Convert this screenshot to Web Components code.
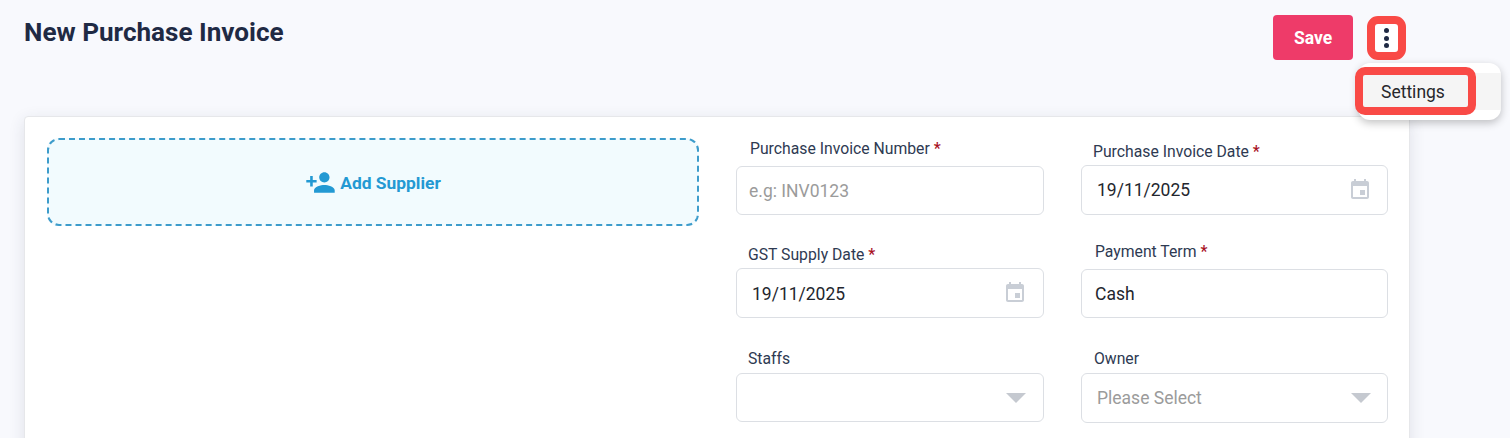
<!DOCTYPE html>
<html>
<head>
<meta charset="utf-8">
<title>New Purchase Invoice</title>
<style>
    html, body { margin: 0; height: 438px; overflow: hidden; background: #f8f9fd; font-family: Roboto, "Liberation Sans", sans-serif; }
</style>
</head>
<body>
<invoice-page>
    <page-header slot="header" title="New Purchase Invoice"></page-header>
    <invoice-card slot="card">
        <add-supplier slot="left"></add-supplier>
        <form-field style="--top:22px;--label-x:14px;--gap:8px;--h:49px;--pad:12px" label="Purchase Invoice Number" required placeholder>e.g: INV0123</form-field>
        <form-field style="--top:25px;--label-x:12px;--gap:4px;--h:50px;--pad:15px;--end:17px" label="Purchase Invoice Date" required icon="date">19/11/2025</form-field>
        <form-field style="--top:30px;--label-x:12px;--gap:4px;--h:50px;--pad:15px;--text-y:1px" label="GST Supply Date" required icon="date">19/11/2025</form-field>
        <form-field style="--top:27px;--label-x:14px;--gap:8px;--h:49px;--pad:13px" label="Payment Term" required>Cash</form-field>
        <form-field style="--top:31px;--label-x:12px;--gap:5px;--h:49px" label="Staffs" icon="arrow"></form-field>
        <form-field style="--top:31px;--label-x:13px;--gap:5px;--h:50px;--pad:15px;--end:17px" label="Owner" placeholder icon="arrow">Please Select</form-field>
    </invoice-card>
</invoice-page>
<script>
class InvoicePage extends HTMLElement {
    constructor() {
        super();
        this.attachShadow({ mode: 'open' });
        this.shadowRoot.innerHTML = `
        <style>
            :host { display: block; padding: 0 100px 0 24px; color: #1f2a44; }
        </style>
        <slot name="header"></slot>
        <slot name="card"></slot>
        `;
    }
}

class PageHeader extends HTMLElement {
    constructor() {
        super();
        this.attachShadow({ mode: 'open' });
        this.shadowRoot.innerHTML = `
        <style>
            :host { display: flex; justify-content: space-between; align-items: flex-start; height: 116px; position: relative; }
            h1 { margin: 15px 0 0; font-size: 26.1px; line-height: 34px; font-weight: 700; color: #1f2a44; }
            .actions { display: flex; align-items: flex-start; margin-top: 15px; margin-right: 4px; }
            .save {
                width: 80px; height: 45px; border: 0; border-radius: 4px; padding: 0;
                background: #ee3b69; color: #fff; font: 700 17.5px Roboto, sans-serif;
            }
            .more {
                box-sizing: border-box; width: 39px; height: 44px; margin: 1px 0 0 14px; padding: 0;
                background: #fff; border: 8px solid #f94a46; border-radius: 11px;
                display: flex; flex-direction: column; align-items: center; justify-content: center; gap: 2.5px;
            }
            .more i { width: 5px; height: 5px; border-radius: 50%; background: #1f2a44; }
        </style>
        <h1></h1>
        <div class="actions">
            <button class="save">Save</button>
            <button class="more"><i></i><i></i><i></i></button>
        </div>
        <action-menu></action-menu>
        `;
        this.shadowRoot.querySelector('h1').textContent = this.getAttribute('title');
    }
}

class ActionMenu extends HTMLElement {
    constructor() {
        super();
        this.attachShadow({ mode: 'open' });
        this.shadowRoot.innerHTML = `
        <style>
            :host {
                position: absolute; left: 1334px; top: 63px; width: 143px; height: 57px;
                background: #fff; border-radius: 12px; box-shadow: 0 3px 8px rgba(0,0,0,.24); z-index: 2;
            }
            .band { position: absolute; left: 0; right: 0; top: 10px; height: 37px; background: #f5f5f5; }
            .item {
                box-sizing: border-box; position: absolute; left: -3px; top: 4px; width: 121px; height: 48px;
                border: 8px solid #f94a46; border-radius: 10px; background: #f5f5f5;
                font-size: 17.5px; line-height: 35px; padding-left: 18px; color: #26272b;
            }
        </style>
        <div class="band"></div>
        <div class="item">Settings</div>
        `;
    }
}

class InvoiceCard extends HTMLElement {
    constructor() {
        super();
        this.attachShadow({ mode: 'open' });
        this.shadowRoot.innerHTML = `
        <style>
            :host {
                display: grid; grid-template-columns: 652px 652px; column-gap: 37px; box-sizing: border-box;
                width: 1386px; min-height: 400px; padding: 0 21px 0 22px;
                background: #fff; border: 1px solid #e6e7ea; border-radius: 4px;
                box-shadow: 0 4px 16px rgba(40,50,80,.12);
            }
            .right { display: grid; grid-template-columns: 308px 307px; column-gap: 37px; align-content: start; }
            .left { padding-top: 21px; }
        </style>
        <div class="left"><slot name="left"></slot></div>
        <div class="right"><slot></slot></div>
        `;
    }
}

class AddSupplier extends HTMLElement {
    constructor() {
        super();
        this.attachShadow({ mode: 'open' });
        this.shadowRoot.innerHTML = `
        <style>
            :host {
                display: flex; align-items: center; justify-content: center; gap: 4px; box-sizing: border-box;
                height: 88px; padding-top: 1px; background: #f2fbfe; border: 2px dashed #3d9ccb; border-radius: 12px;
                color: #2399d3; font-weight: 700; font-size: 17.4px;
            }
            svg { width: 31px; height: 31px; fill: currentColor; }
        </style>
        <svg viewBox="0 0 24 24"><path d="M15 12c2.21 0 4-1.79 4-4s-1.79-4-4-4-4 1.79-4 4 1.79 4 4 4zm-9-2V7H4v3H1v2h3v3h2v-3h3v-2H6zm9 4c-2.67 0-8 1.34-8 4v2h16v-2c0-2.66-5.33-4-8-4z"/></svg>
        <span>Add Supplier</span>
        `;
    }
}

const FIELD_ICONS = {
    date: `<svg class="date" viewBox="0 0 24 24"><path d="M17 12h-5v5h5v-5zM16 1v2H8V1H6v2H5c-1.11 0-1.99.9-1.99 2L3 19c0 1.1.89 2 2 2h14c1.1 0 2-.9 2-2V5c0-1.1-.9-2-2-2h-1V1h-2zm3 18H5V8h14v11z"/></svg>`,
    arrow: `<span class="arrow"></span>`
};

class FormField extends HTMLElement {
    constructor() {
        super();
        this.attachShadow({ mode: 'open' });
        const star = this.hasAttribute('required') ? ' <b>*</b>' : '';
        const icon = FIELD_ICONS[this.getAttribute('icon')] || '';
        this.shadowRoot.innerHTML = `
        <style>
            :host { display: block; padding-top: var(--top, 0); }
            label {
                display: block; padding-left: var(--label-x, 12px); margin-bottom: var(--gap, 5px);
                font-size: 15.75px; line-height: 19px; color: #2e3a52;
            }
            b { color: #a8121f; font-weight: 500; }
            .box {
                box-sizing: border-box; height: var(--h, 50px); display: flex; align-items: center; justify-content: space-between;
                padding: 0 var(--end, 18px) 0 var(--pad, 13px); background: #fff; border: 1px solid #dcdfe4; border-radius: 6px;
                font-size: 17.5px; color: #23262e;
            }
            .box span { padding-top: var(--text-y, 0); }
            :host([placeholder]) .box { color: #9b9b9b; }
            .date { width: 24px; height: 24px; fill: #c9ced6; margin-right: -2px; }
            .arrow { width: 0; height: 0; border: 10px solid transparent; border-bottom: 0; border-top-color: #c5c9d0; margin-left: auto; margin-right: -1px; }
        </style>
        <label></label>
        <div class="box"><span><slot></slot></span>${icon}</div>
        `;
        const label = this.shadowRoot.querySelector('label');
        label.textContent = this.getAttribute('label');
        label.insertAdjacentHTML('beforeend', star);
    }
}

customElements.define('invoice-page', InvoicePage);
customElements.define('page-header', PageHeader);
customElements.define('action-menu', ActionMenu);
customElements.define('invoice-card', InvoiceCard);
customElements.define('add-supplier', AddSupplier);
customElements.define('form-field', FormField);
</script>
</body>
</html>
